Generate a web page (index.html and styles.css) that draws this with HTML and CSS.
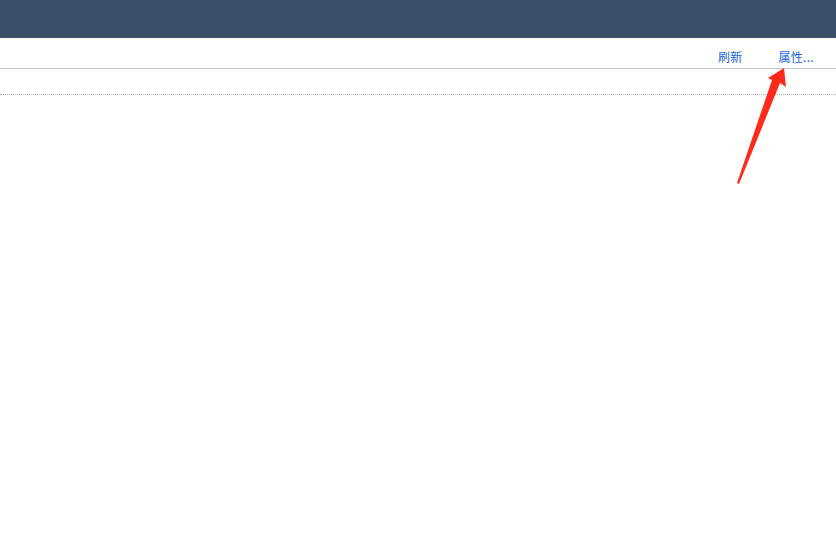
FILE: index.html
```html
<!DOCTYPE html>
<html lang="zh-CN">
<head>
    <meta charset="UTF-8">
    <title>属性</title>
    <link rel="stylesheet" href="styles.css">
</head>
<body>
    <div class="header"></div>

    <div class="toolbar">
        <a href="#" class="tool-link">刷新</a>
        <a href="#" class="tool-link">属性...</a>
    </div>

    <div class="content">
        <div class="dotted-row"></div>
    </div>

    <!-- annotation arrow -->
    <svg class="arrow" width="836" height="535" viewBox="0 0 836 535">
        <polygon points="784,68 786,87 780,83 739,184 737,183 772,80 768,78" fill="#ff2a1a"/>
    </svg>
</body>
</html>
```

FILE: styles.css
```css
body {
    margin: 0;
    font-family: "Noto Sans CJK SC", "Liberation Sans", sans-serif;
    background: #fff;
}

.header {
    height: 38px;
    background-color: #3d5069;
}

.toolbar {
    height: 29px;
    border-bottom: 1px solid #c4c4c4;
    display: flex;
    justify-content: flex-end;
    align-items: center;
    gap: 36px;
    padding: 1px 22px 0 0;
    box-sizing: content-box;
}

.tool-link {
    color: #1565dc;
    text-decoration: none;
    font-size: 12px;
    line-height: 14px;
    margin-top: 6px;
    letter-spacing: 0.3px;
}

.content {
    padding-top: 25px;
}

.dotted-row {
    border-top: 1px dotted #b0b0b0;
}

.arrow {
    position: absolute;
    left: 0;
    top: 0;
    pointer-events: none;
}
```
